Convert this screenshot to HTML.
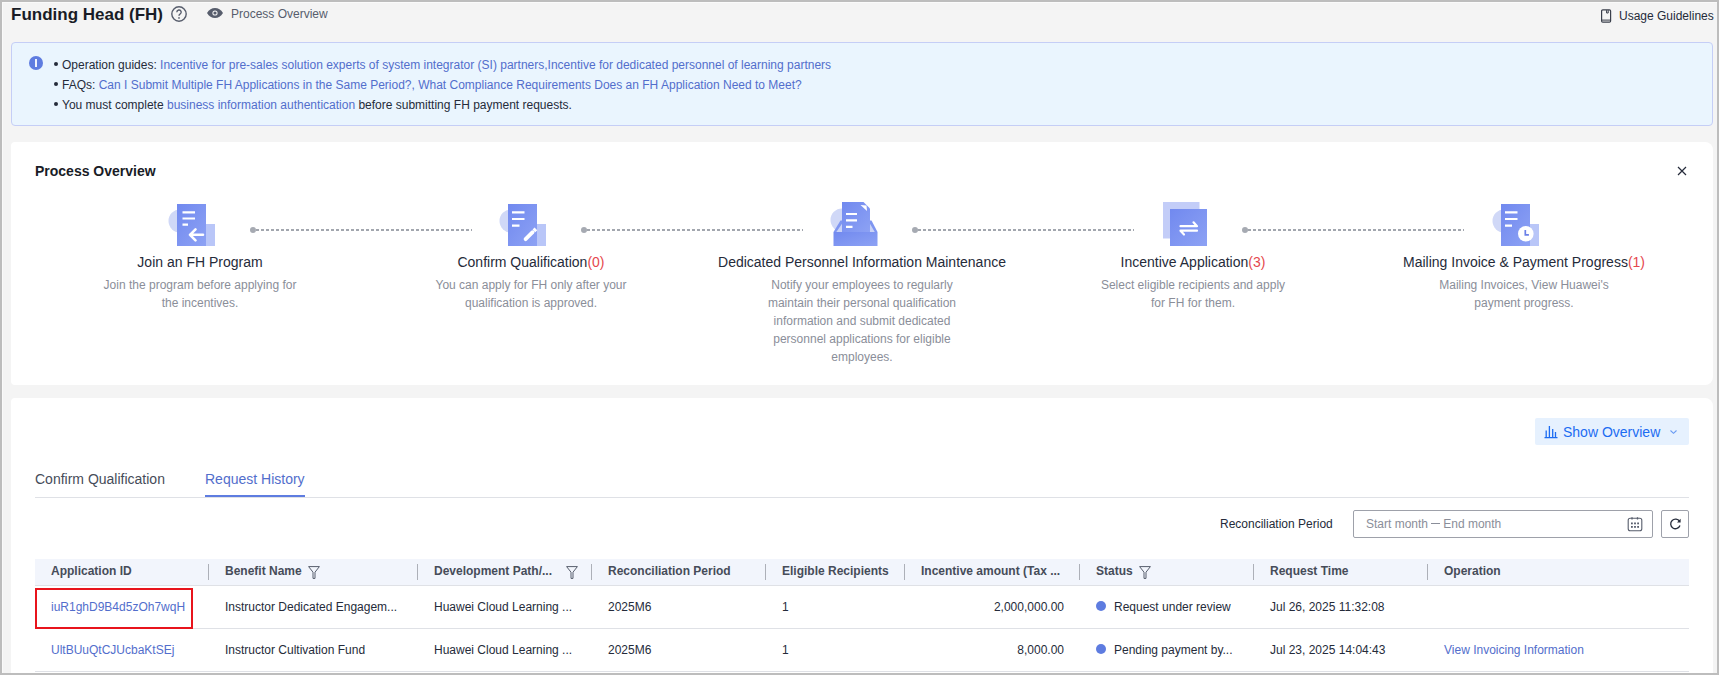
<!DOCTYPE html>
<html><head><meta charset="utf-8">
<style>
*{box-sizing:border-box;margin:0;padding:0}
html,body{width:1719px;height:675px;overflow:hidden;background:#bdbdbd;font-family:"Liberation Sans",sans-serif;color:#252b3a}
.page{position:absolute;left:2px;top:2px;width:1715px;height:671px;background:#f4f4f4;overflow:hidden}
.abs{position:absolute;white-space:nowrap}
.t12{font-size:12px;line-height:16px}
.t14{font-size:14px;line-height:18px}
.link{color:#526ecc}
.card{position:absolute;background:#fff;border-radius:4px 8px 8px 4px}
.red{color:#e5474d}
.step{position:absolute;width:360px;text-align:center}
.step .tt{font-size:14px;line-height:18px;color:#252b3a;white-space:nowrap}
.step .ds{font-size:12px;line-height:18px;color:#8a8e99;margin:5px auto 0;width:200px}
.th{position:absolute;top:558px;height:27px;font-size:12px;line-height:16px;font-weight:700;color:#464c59;padding-top:5px}
.sep{position:absolute;top:564px;width:1px;height:16px;background:#adb0b8}
.td{position:absolute;font-size:12px;line-height:16px;color:#252b3a;white-space:nowrap}
.td.link{color:#526ecc}
.bl{position:absolute;left:54px;width:4px;height:4px;border-radius:50%;background:#252b3a}
</style></head><body>
<div class="page" style="box-shadow:inset 1px 1px 0 #fafafa"></div>
<div id="root" style="position:absolute;left:0;top:0;width:1719px;height:675px;overflow:hidden">

<!-- header -->
<div class="abs" style="left:11px;top:5px;font-size:17px;line-height:20px;font-weight:700;color:#191c26">Funding Head (FH)</div>
<svg class="abs" style="left:171px;top:6px" width="16" height="16" viewBox="0 0 16 16"><circle cx="8" cy="8" r="7.2" fill="none" stroke="#575d6c" stroke-width="1.4"/><path d="M5.8 6.2a2.2 2.2 0 1 1 3.2 2c-.7.4-1 .8-1 1.6" fill="none" stroke="#575d6c" stroke-width="1.4"/><circle cx="8" cy="11.9" r=".85" fill="#575d6c"/></svg>
<svg class="abs" style="left:207px;top:8px" width="16" height="10" viewBox="0 0 16 10"><path d="M0 5C2 1.6 4.8 0 8 0s6 1.6 8 5c-2 3.4-4.8 5-8 5S2 8.4 0 5z" fill="#575d6c"/><circle cx="8" cy="5" r="2.6" fill="#f4f4f4"/><circle cx="8" cy="5" r="1.6" fill="#575d6c"/></svg>
<div class="abs t12" style="left:231px;top:6px;color:#575d6c">Process Overview</div>
<svg class="abs" style="left:1600px;top:9px" width="12" height="14" viewBox="0 0 12 14"><rect x="1.6" y="0.9" width="9" height="12.2" rx="1.2" fill="none" stroke="#3a3f4b" stroke-width="1.2"/><path d="M2 11.1h8.2" stroke="#3a3f4b" stroke-width="1"/><path d="M6.6 1.2v2.8h1.6V1.2" fill="none" stroke="#3a3f4b" stroke-width="1"/></svg>
<div class="abs t12" style="left:1619px;top:8px;color:#252b3a">Usage Guidelines</div>

<!-- notice -->
<div class="abs" style="left:11px;top:42px;width:1702px;height:84px;background:#eaf5fe;border:1px solid #c5cef6;border-radius:4px"></div>
<svg class="abs" style="left:29px;top:56px" width="14" height="14" viewBox="0 0 14 14"><circle cx="7" cy="7" r="7" fill="#5e7ce0"/><rect x="6.1" y="3" width="1.8" height="8" fill="#fff"/></svg>
<div class="bl" style="top:62px"></div><div class="bl" style="top:82px"></div><div class="bl" style="top:102px"></div>
<div class="abs t12" style="left:62px;top:55px;line-height:20px">
<div>Operation guides: <span class="link">Incentive for pre-sales solution experts of system integrator (SI) partners,Incentive for dedicated personnel of learning partners</span></div>
<div>FAQs: <span class="link">Can I Submit Multiple FH Applications in the Same Period?, What Compliance Requirements Does an FH Application Need to Meet?</span></div>
<div>You must complete <span class="link">business information authentication</span> before submitting FH payment requests.</div>
</div>

<!-- process card -->
<div class="card" style="left:11px;top:142px;width:1702px;height:243px"></div>
<div class="abs" style="left:35px;top:162px;font-size:14px;line-height:18px;font-weight:700;color:#191c26">Process Overview</div>
<svg class="abs" style="left:1677px;top:166px" width="10" height="10" viewBox="0 0 10 10"><path d="M1 1l8 8M9 1l-8 8" stroke="#252b3a" stroke-width="1.2"/></svg>

<svg class="abs" style="left:0;top:0" width="1719" height="400" viewBox="0 0 1719 400">
<defs>
<linearGradient id="g1" x1="0" y1="0" x2="1" y2="1"><stop offset="0" stop-color="#7189ef"/><stop offset="1" stop-color="#8da2f4"/></linearGradient>
</defs>
<!-- connectors -->
<g fill="#a6aab2">
<circle cx="253" cy="230" r="3"/><circle cx="584" cy="230" r="3"/><circle cx="915" cy="230" r="3"/><circle cx="1245" cy="230" r="3"/>
</g>
<g stroke="#a2a6ae" stroke-width="2" stroke-dasharray="3 2">
<path d="M256 230H472"/><path d="M587 230H803"/><path d="M918 230H1134"/><path d="M1248 230H1464"/>
</g>
<!-- icon 1 -->
<g>
<circle cx="180" cy="221" r="11.5" fill="#d0d8f7"/>
<rect x="206" y="224" width="9" height="22" fill="#b9c6f8"/>
<rect x="177" y="204" width="29" height="42" fill="url(#g1)"/>
<g stroke="#fff" stroke-width="2.2"><path d="M182.5 212.3H195M182.5 218.5H195M182.5 224.6H188"/></g>
<path d="M203 234.8H190M195.5 229.3L190 234.8L195.5 240.3" stroke="#fff" stroke-width="2.6" fill="none" stroke-linecap="round" stroke-linejoin="round"/>
</g>
<!-- icon 2 -->
<g>
<circle cx="511" cy="221" r="11.5" fill="#d0d8f7"/>
<rect x="537" y="224" width="9" height="22" fill="#b9c6f8"/>
<rect x="508" y="204" width="29" height="42" fill="url(#g1)"/>
<g stroke="#fff" stroke-width="2.2"><path d="M512 212.3H524.5M512 219H524.5M512 225.7H519.5"/></g>
<path d="M525.6 239.2L532.6 232.2" stroke="#fff" stroke-width="3.8" stroke-linecap="round"/>
<path d="M533.9 230.9L535.9 228.9" stroke="#fff" stroke-width="3.8"/>
</g>
<!-- icon 3 -->
<g>
<circle cx="842" cy="220" r="11.5" fill="#d0d8f7"/>
<path d="M840.5 220.6H871.5L877.5 232H833.5Z" fill="#7f96f1"/><path d="M842.5 223H869.5L874.8 232H836.3Z" fill="#c9d2f6"/>
<path d="M842 202H863.5L870 208.5V233H842Z" fill="url(#g1)"/>
<path d="M860.5 205L867 211L866.5 205.5Z" fill="#fff"/>
<g stroke="#fff" stroke-width="2.2"><path d="M846 214H857M846 220.3H857M846 226.8H852.5"/></g>
<rect x="833.5" y="232" width="44" height="14" fill="url(#g1)"/>
</g>
<!-- icon 4 -->
<g>
<rect x="1163" y="202" width="36.5" height="36.5" fill="#c3cdf8"/>
<rect x="1170" y="209" width="37" height="37" fill="url(#g1)"/>
<path d="M1180.5 226.2H1197L1193.5 222.3M1197 230.7H1180.5L1184 234.5" stroke="#fff" stroke-width="2.2" fill="none" stroke-linecap="round" stroke-linejoin="round"/>
</g>
<!-- icon 5 -->
<g>
<circle cx="1504" cy="221" r="11.5" fill="#d0d8f7"/>
<rect x="1530" y="224" width="9" height="22" fill="#b9c6f8"/>
<rect x="1501" y="204" width="29" height="42" fill="url(#g1)"/>
<g stroke="#fff" stroke-width="2.2"><path d="M1505 212.3H1517.5M1505 219H1517.5M1505 225.7H1512"/></g>
<circle cx="1525.8" cy="233.8" r="7.8" fill="#fff"/>
<path d="M1525.3 230v4.8h3.6" stroke="#6b80e8" stroke-width="1.7" fill="none"/>
</g>
</svg>

<div class="step" style="left:20px;top:253px"><div class="tt">Join an FH Program</div><div class="ds">Join the program before applying for the incentives.</div></div>
<div class="step" style="left:351px;top:253px"><div class="tt">Confirm Qualification<span class="red">(0)</span></div><div class="ds">You can apply for FH only after your qualification is approved.</div></div>
<div class="step" style="left:682px;top:253px"><div class="tt">Dedicated Personnel Information Maintenance</div><div class="ds">Notify your employees to regularly maintain their personal qualification information and submit dedicated personnel applications for eligible employees.</div></div>
<div class="step" style="left:1013px;top:253px"><div class="tt">Incentive Application<span class="red">(3)</span></div><div class="ds">Select eligible recipients and apply for FH for them.</div></div>
<div class="step" style="left:1344px;top:253px"><div class="tt">Mailing Invoice &amp; Payment Progress<span class="red">(1)</span></div><div class="ds">Mailing Invoices, View Huawei's payment progress.</div></div>

<!-- table card -->
<div class="card" style="left:11px;top:398px;width:1702px;height:300px"></div>

<div class="abs" style="left:1535px;top:418px;width:154px;height:27px;background:#e6f1fe;border-radius:2px"></div>
<svg class="abs" style="left:1544px;top:425px" width="14" height="14" viewBox="0 0 14 14"><path d="M2.2 5.5V12M5.4 1V12M8.7 4V12M11.5 7V12M0.5 12.6H13.5" stroke="#1c6cf2" stroke-width="1.3" fill="none"/></svg>
<div class="abs t14" style="left:1563px;top:423px;color:#1c6cf2">Show Overview</div>
<svg class="abs" style="left:1669px;top:429px" width="9" height="6" viewBox="0 0 9 6"><path d="M1.5 1.5l3 2.8l3-2.8" stroke="#6a9bf3" stroke-width="1.1" fill="none"/></svg>

<div class="abs t14" style="left:35px;top:470px;color:#464c59">Confirm Qualification</div>
<div class="abs t14" style="left:205px;top:470px;color:#526ecc">Request History</div>
<div class="abs" style="left:35px;top:497px;width:1654px;height:1px;background:#dfe1e6"></div>
<div class="abs" style="left:205px;top:495px;width:100px;height:2px;background:#5e7ce0"></div>

<div class="abs t12" style="left:1220px;top:516px;color:#252b3a">Reconciliation Period</div>
<div class="abs" style="left:1353px;top:510px;width:300px;height:28px;border:1px solid #9ea1aa;border-radius:2px;background:#fff"></div>
<div class="abs t12" style="left:1366px;top:516px;color:#8a8e99">Start month <span style="display:inline-block;width:8.5px;height:1px;background:#8a8e99;vertical-align:4px"></span> End month</div>
<svg class="abs" style="left:1627px;top:516px" width="16" height="16" viewBox="0 0 16 16"><rect x="1.2" y="2.2" width="13.6" height="12.6" rx="2" fill="none" stroke="#575d6c" stroke-width="1.1"/><path d="M5 1.2v2.4M10.5 1.2v2.4" stroke="#575d6c" stroke-width="1.3"/><g fill="#575d6c"><rect x="4" y="6.5" width="1.8" height="1.8"/><rect x="7.1" y="6.5" width="1.8" height="1.8"/><rect x="10.2" y="6.5" width="1.8" height="1.8"/><rect x="4" y="10" width="1.8" height="1.8"/><rect x="7.1" y="10" width="1.8" height="1.8"/><rect x="10.2" y="10" width="1.8" height="1.8"/></g></svg>
<div class="abs" style="left:1661px;top:510px;width:28px;height:28px;border:1px solid #9ea1aa;border-radius:2px;background:#fff"></div>
<svg class="abs" style="left:1669px;top:517px" width="13" height="13" viewBox="0 0 13 13"><path d="M10.6 4.4A4.8 4.8 0 1 0 11 8.6" stroke="#252b3a" stroke-width="1.3" fill="none"/><path d="M11.6 1.8V5.4H8Z" fill="#252b3a"/></svg>

<!-- table -->
<div class="abs" style="left:35px;top:559px;width:1654px;height:27px;background:#f2f5fc;border-bottom:1px solid #dfe1e6"></div>
<div class="th" style="left:51px">Application ID</div>
<div class="th" style="left:225px">Benefit Name</div>
<div class="th" style="left:434px">Development Path/...</div>
<div class="th" style="left:608px">Reconciliation Period</div>
<div class="th" style="left:782px">Eligible Recipients</div>
<div class="th" style="left:921px">Incentive amount (Tax ...</div>
<div class="th" style="left:1096px">Status</div>
<div class="th" style="left:1270px">Request Time</div>
<div class="th" style="left:1444px">Operation</div>
<div class="sep" style="left:208px"></div><div class="sep" style="left:417px"></div><div class="sep" style="left:591px"></div><div class="sep" style="left:765px"></div><div class="sep" style="left:904px"></div><div class="sep" style="left:1079px"></div><div class="sep" style="left:1253px"></div><div class="sep" style="left:1427px"></div>
<svg class="abs" style="left:308px;top:566px" width="12" height="13" viewBox="0 0 12 13"><path d="M0.6 0.6H11.4L7 6.2V12.4H5V6.2Z" fill="none" stroke="#575d6c" stroke-width="1" stroke-linejoin="round"/></svg>
<svg class="abs" style="left:566px;top:566px" width="12" height="13" viewBox="0 0 12 13"><path d="M0.6 0.6H11.4L7 6.2V12.4H5V6.2Z" fill="none" stroke="#575d6c" stroke-width="1" stroke-linejoin="round"/></svg>
<svg class="abs" style="left:1139px;top:566px" width="12" height="13" viewBox="0 0 12 13"><path d="M0.6 0.6H11.4L7 6.2V12.4H5V6.2Z" fill="none" stroke="#575d6c" stroke-width="1" stroke-linejoin="round"/></svg>

<div class="abs" style="left:35px;top:628px;width:1654px;height:1px;background:#dfe1e6"></div>
<div class="abs" style="left:35px;top:671px;width:1654px;height:1px;background:#dfe1e6"></div>

<div class="td link" style="left:51px;top:599px">iuR1ghD9B4d5zOh7wqH</div>
<div class="td" style="left:225px;top:599px">Instructor Dedicated Engagem...</div>
<div class="td" style="left:434px;top:599px">Huawei Cloud Learning ...</div>
<div class="td" style="left:608px;top:599px">2025M6</div>
<div class="td" style="left:782px;top:599px">1</div>
<div class="td" style="left:900px;top:599px;width:164px;text-align:right">2,000,000.00</div>
<div class="abs" style="left:1096px;top:601px;width:10px;height:10px;border-radius:50%;background:#5e7ce0"></div>
<div class="td" style="left:1114px;top:599px">Request under review</div>
<div class="td" style="left:1270px;top:599px">Jul 26, 2025 11:32:08</div>

<div class="td link" style="left:51px;top:642px">UltBUuQtCJUcbaKtSEj</div>
<div class="td" style="left:225px;top:642px">Instructor Cultivation Fund</div>
<div class="td" style="left:434px;top:642px">Huawei Cloud Learning ...</div>
<div class="td" style="left:608px;top:642px">2025M6</div>
<div class="td" style="left:782px;top:642px">1</div>
<div class="td" style="left:900px;top:642px;width:164px;text-align:right">8,000.00</div>
<div class="abs" style="left:1096px;top:644px;width:10px;height:10px;border-radius:50%;background:#5e7ce0"></div>
<div class="td" style="left:1114px;top:642px">Pending payment by...</div>
<div class="td" style="left:1270px;top:642px">Jul 23, 2025 14:04:43</div>
<div class="td link" style="left:1444px;top:642px">View Invoicing Information</div>

<div class="abs" style="left:35px;top:588px;width:158px;height:41px;border:2px solid #e8141c"></div>

</div>
<!-- frame -->
<div style="position:absolute;left:0;top:0;width:1719px;height:675px;border:2px solid #bdbdbd;pointer-events:none"></div>
</body></html>
